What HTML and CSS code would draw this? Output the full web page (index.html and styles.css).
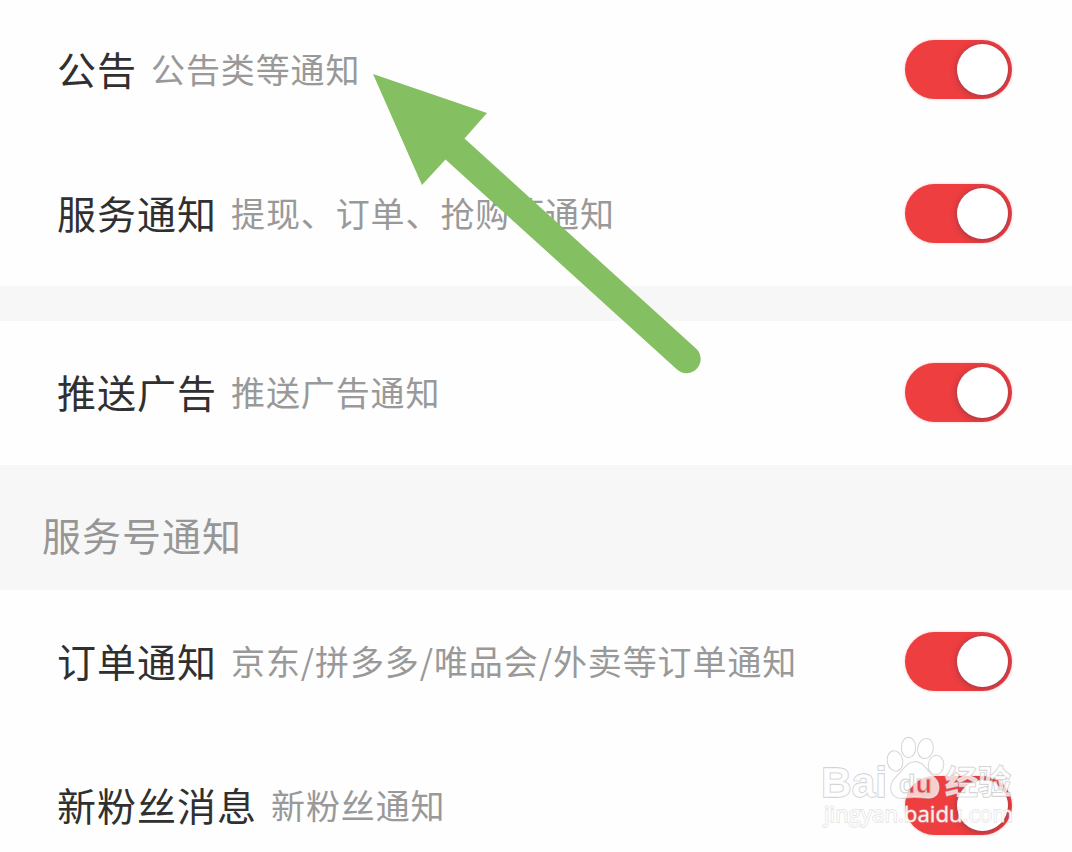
FILE: index.html
```html
<!DOCTYPE html>
<html lang="zh-CN">
<head>
    <meta charset="UTF-8">
    <meta name="viewport" content="width=device-width, initial-scale=1.0">
    <title>通知设置</title>
    <link rel="stylesheet" href="styles.css">
</head>
<body>
    <div class="page">
        <div class="group">
            <div class="row">
                <span class="name">公告</span>
                <span class="desc">公告类等通知</span>
                <div class="switch"><div class="knob"></div></div>
            </div>
            <div class="row">
                <span class="name">服务通知</span>
                <span class="desc">提现、订单、抢购等通知</span>
                <div class="switch"><div class="knob"></div></div>
            </div>
        </div>
        <div class="divider"></div>
        <div class="group">
            <div class="row">
                <span class="name">推送广告</span>
                <span class="desc">推送广告通知</span>
                <div class="switch"><div class="knob"></div></div>
            </div>
        </div>
        <div class="group-title">服务号通知</div>
        <div class="group">
            <div class="row">
                <span class="name">订单通知</span>
                <span class="desc">京东/拼多多/唯品会/外卖等订单通知</span>
                <div class="switch"><div class="knob"></div></div>
            </div>
            <div class="row">
                <span class="name">新粉丝消息</span>
                <span class="desc">新粉丝通知</span>
                <div class="switch"><div class="knob"></div></div>
            </div>
        </div>
    </div>

    <svg class="arrow" width="340" height="310" viewBox="370 70 340 310">
        <path d="M373 74 L487 113 L464.500 138.500 L696 348.500 A14 14 0 0 1 677 369.500 L445.500 159.500 L422 185 Z" />
    </svg>

    <svg class="watermark" width="212" height="112" viewBox="810 730 212 112">
        <defs>
            <mask id="du-hole">
                <rect x="880" y="750" width="70" height="60" fill="#fff" />
                <text class="logo-du" x="899" y="793" textLength="33" lengthAdjust="spacingAndGlyphs" fill="#000">du</text>
            </mask>
        </defs>
        <g class="mark">
            <text class="logo" x="821" y="797" textLength="66" lengthAdjust="spacingAndGlyphs">Bai</text>
            <ellipse cx="895" cy="761" rx="7.500" ry="10" transform="rotate(-12 895 761)" />
            <ellipse cx="908.500" cy="747.500" rx="7" ry="10" />
            <ellipse cx="925.500" cy="748.500" rx="7.500" ry="10" transform="rotate(12 925.500 748.500)" />
            <ellipse cx="936" cy="765" rx="7.500" ry="9.500" transform="rotate(5 936 765)" />
            <path mask="url(#du-hole)" d="M915 762 C907 762 904 769 899 774 C894 779 891 782 891 788 C891 795 896 799 903 798 C911 797 919 797 927 798 C934 799 939 795 939 787 C939 781 935 778 930 773 C925 768 923 762 915 762 Z" />
            <text class="logo-du outline" x="899" y="793" textLength="33" lengthAdjust="spacingAndGlyphs">du</text>
            <text class="logo-cn" x="945" y="794" textLength="66" lengthAdjust="spacingAndGlyphs">经验</text>
            <text class="url" x="824" y="822" textLength="189" lengthAdjust="spacingAndGlyphs">jingyan.baidu.com</text>
        </g>
    </svg>
</body>
</html>
```
FILE: styles.css
```css
body {
    margin: 0;
    position: relative;
    width: 1072px;
    height: 852px;
    overflow: hidden;
    background: #fefefe;
    font-family: "Noto Sans CJK SC", sans-serif;
}
.page {
    margin-top: -2px;
}
.row {
    display: flex;
    align-items: center;
    height: 144px;
    padding: 0 60px 1px 57px;
    box-sizing: border-box;
}
.name {
    font-size: 39px;
    letter-spacing: 1px;
    line-height: 60px;
    color: #303030;
    margin-right: 14px;
    padding-bottom: 3px;
}
.desc {
    font-size: 34px;
    letter-spacing: 0.9px;
    line-height: 60px;
    color: #999;
    padding-bottom: 1px;
}
.switch {
    display: flex;
    align-items: center;
    justify-content: flex-end;
    width: 107px;
    height: 59px;
    margin-left: auto;
    padding-right: 4px;
    box-sizing: border-box;
    border-radius: 30px;
    background: #ee3e3f;
    box-shadow: 0 0 3px rgba(238, 62, 63, 0.3);
    overflow: hidden;
}
.knob {
    width: 51px;
    height: 51px;
    border-radius: 50%;
    background: #fff;
    box-shadow: 0 1px 6px rgba(60, 50, 80, 0.5);
}
.divider {
    height: 35px;
    background: #f7f7f7;
}
.group-title {
    height: 125px;
    line-height: 138px;
    padding-left: 42px;
    background: #f7f7f7;
    color: #969696;
    font-size: 39px;
    letter-spacing: 1px;
}
.arrow {
    position: absolute;
    left: 370px;
    top: 70px;
    fill: #84bf62;
}
.watermark {
    position: absolute;
    left: 810px;
    top: 730px;
}
.mark {
    fill: rgba(255, 255, 255, 0.75);
    stroke: rgba(190, 190, 190, 0.8);
    stroke-width: 1.3px;
    paint-order: stroke;
}
.logo {
    font: bold 42px "Liberation Sans", sans-serif;
}
.logo-du {
    font: bold 26px "Liberation Sans", sans-serif;
    stroke: none;
}
.outline {
    fill: none;
    stroke: rgba(200, 200, 200, 0.8);
    stroke-width: 1px;
}
.logo-cn {
    font: bold 33px "Noto Sans CJK SC", sans-serif;
}
.url {
    font: 22px "Open Sans", sans-serif;
    fill: rgba(255, 255, 255, 0.9);
    stroke: rgba(205, 205, 205, 0.6);
}
```
